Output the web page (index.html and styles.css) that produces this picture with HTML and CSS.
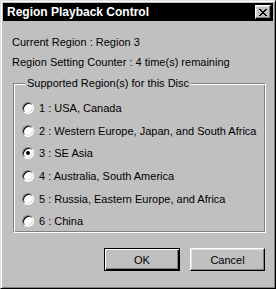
FILE: index.html
```html
<!DOCTYPE html>
<html lang="en">

<head>
    <meta charset="UTF-8">
    <title>Region Playback Control</title>
    <link rel="stylesheet" href="styles.css">
</head>

<body>
    <div class="window">
        <div class="title-bar">
            <span class="title">Region Playback Control</span>
            <button class="close-btn" type="button" aria-label="Close">
                <svg width="8" height="7" viewBox="0 0 8 7">
                    <path d="M0 0h2v1h1v1h2v-1h1v-1h2v1h-1v1h-1v1h-1v1h1v1h1v1h1v1h-2v-1h-1v-1h-2v1h-1v1h-2v-1h1v-1h1v-1h1v-1h-1v-1h-1v-1h-1z" fill="#000"/>
                </svg>
            </button>
        </div>

        <div class="content">
            <p class="info">Current Region : Region 3</p>
            <p class="info">Region Setting Counter : 4 time(s) remaining</p>

            <!-- Regiones soportadas -->
            <fieldset class="group">
                <legend>Supported Region(s) for this Disc</legend>
                <label class="radio"><span class="dot"></span>1 : USA, Canada</label>
                <label class="radio"><span class="dot"></span>2 : Western Europe, Japan, and South Africa</label>
                <label class="radio"><span class="dot checked"></span>3 : SE Asia</label>
                <label class="radio"><span class="dot"></span>4 : Australia, South America</label>
                <label class="radio"><span class="dot"></span>5 : Russia, Eastern Europe, and Africa</label>
                <label class="radio"><span class="dot"></span>6 : China</label>
            </fieldset>

            <div class="buttons">
                <button class="btn default" type="button">OK</button>
                <button class="btn" type="button">Cancel</button>
            </div>
        </div>
    </div>
</body>

</html>
```

FILE: styles.css
```css
body {
    margin: 0;
    padding: 0;
    background-color: #c0c0c0;
    font-family: "Liberation Sans", Arial, sans-serif;
    font-size: 11px;
    color: #000;
}

.window {
    width: 276px;
    height: 289px;
    box-sizing: border-box;
    background: #c0c0c0;
    border: 1px solid;
    border-color: #dfdfdf #000 #000 #dfdfdf;
    box-shadow: inset 1px 1px #fff, inset -1px -1px #808080;
    padding: 2px;
}

.title-bar {
    height: 18px;
    background: #000;
    display: flex;
    align-items: center;
    justify-content: space-between;
    padding: 0 2px 0 4px;
}

.title {
    color: #fff;
    font-weight: bold;
    font-size: 12px;
}

.close-btn {
    width: 16px;
    height: 14px;
    padding: 0;
    margin: 0;
    background: #c0c0c0;
    border: 1px solid;
    border-color: #fff #000 #000 #fff;
    box-shadow: inset -1px -1px #808080, inset 1px 1px #dfdfdf;
    display: flex;
    align-items: center;
    justify-content: center;
}

.content {
    padding: 11px 8px 0 9px;
}

.info {
    margin: 0;
    line-height: 20px;
}

.group {
    margin: 5px 0 0 1px;
    width: 253px;
    height: 156px;
    box-sizing: border-box;
    padding: 8px 0 0 8px;
    border: 1px solid;
    border-color: #808080 #fff #fff #808080;
    box-shadow: inset 1px 1px #fff, inset -1px -1px #808080;
}

.group legend {
    padding: 0 2px;
    margin-left: 3px;
    background: #c0c0c0;
}

.radio {
    display: flex;
    align-items: center;
    height: 22.6px;
    white-space: nowrap;
}

.dot {
    width: 12px;
    height: 12px;
    box-sizing: border-box;
    border-radius: 50%;
    background: #fff;
    border: 1px solid;
    border-color: #808080 #fff #fff #808080;
    box-shadow: inset 1px 1px #000, inset -1px -1px #dfdfdf;
    margin-right: 5px;
    position: relative;
}

.dot.checked::after {
    content: "";
    position: absolute;
    left: 3px;
    top: 3px;
    width: 4px;
    height: 4px;
    border-radius: 50%;
    background: #000;
}

.buttons {
    display: flex;
    justify-content: flex-end;
    gap: 10px;
    margin-top: 15px;
}

.btn {
    width: 75px;
    height: 23px;
    font-family: "Liberation Sans", Arial, sans-serif;
    font-size: 11px;
    color: #000;
    background: #c0c0c0;
    border: 1px solid;
    border-color: #fff #000 #000 #fff;
    box-shadow: inset -1px -1px #808080, inset 1px 1px #dfdfdf;
    padding: 0;
}

.btn.default {
    width: 76px;
    border: 1px solid #000;
    box-shadow: inset 1px 1px #fff, inset -1px -1px #000, inset -2px -2px #808080;
}
```
